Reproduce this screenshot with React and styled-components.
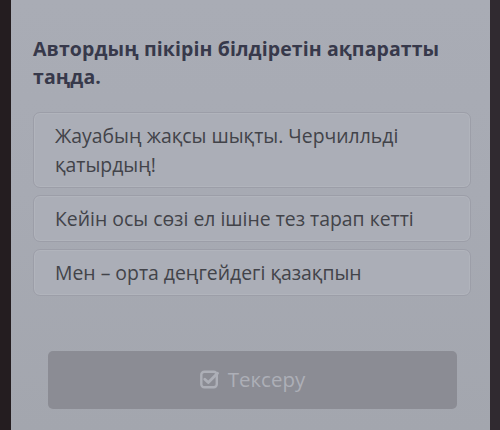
import React from "react";
import styled, { createGlobalStyle } from "styled-components";

const Global = createGlobalStyle`
  html, body { margin: 0; padding: 0; background: #2b2427; }
  body { width: 500px; height: 430px; overflow: hidden; }
  #root { height: 430px; }
`;

const Frame = styled.div`
  display: flex;
  height: 430px;
  background: #2b2427;
`;

const Bezel = styled.div`
  width: ${(p) => p.$w}px;
  background: ${(p) => p.$c};
  flex: none;
`;

const Screen = styled.div`
  flex: 1;
  display: flex;
  flex-direction: column;
  padding: 35px 18px 0 22px;
  background: linear-gradient(180deg, #a9acb5 0%, #a7aab3 45%, #a3a6ae 100%);
  font-family: "Open Sans", "Noto Sans", sans-serif;
`;

const Title = styled.h1`
  margin: 0;
  font-size: 19.5px;
  line-height: 28px;
  font-weight: 700;
  color: #37394b;
  letter-spacing: 0.1px;
`;

const Options = styled.div`
  display: flex;
  flex-direction: column;
  gap: 7px;
  margin-top: 21px;
  margin-right: 1px;
`;

const Option = styled.div`
  border: 1px solid #9c9ea8;
  border-radius: 7px;
  background: #abaeb7;
  padding: 8px 20px 8px 21px;
  font-size: 19.4px;
  line-height: 29px;
  color: #424349;
  box-shadow: inset 0 0 0 1px rgba(255,255,255,0.08);
`;

const Footer = styled.div`
  display: flex;
  justify-content: center;
  margin-top: 55px;
`;

const Button = styled.button`
  width: 409px;
  height: 58px;
  border: none;
  border-radius: 5px;
  background: #8b8c94;
  color: #adafb7;
  font-family: "Open Sans", "Noto Sans", sans-serif;
  font-size: 20.5px;
  display: flex;
  align-items: center;
  justify-content: center;
  gap: 9px;
  padding: 0 0 2px 0;
`;

const CheckIcon = () => (
  <svg width="19" height="19" viewBox="0 0 19 19" fill="none">
    <rect x="1.3" y="1.8" width="15.5" height="15.5" rx="3" stroke="#adafb7" strokeWidth="2.4" />
    <path d="M4.8 9.2 L8.3 12.6 L17.5 3.2" stroke="#adafb7" strokeWidth="2.8" strokeLinecap="round" strokeLinejoin="round" />
  </svg>
);

export default function App() {
  return (
    <>
      <Global />
      <Frame>
        <Bezel $w={11} $c="#241d20" />
        <Screen>
          <Title>
            Автордың пікірін білдіретін ақпаратты
            <br />
            таңда.
          </Title>
          <Options>
            <Option>
              Жауабың жақсы шықты. Черчилльді
              <br />
              қатырдың!
            </Option>
            <Option>Кейін осы сөзі ел ішіне тез тарап кетті</Option>
            <Option>Мен – орта деңгейдегі қазақпын</Option>
          </Options>
          <Footer>
            <Button>
              <CheckIcon />
              Тексеру
            </Button>
          </Footer>
        </Screen>
        <Bezel $w={10} $c="#302a30" />
      </Frame>
    </>
  );
}
